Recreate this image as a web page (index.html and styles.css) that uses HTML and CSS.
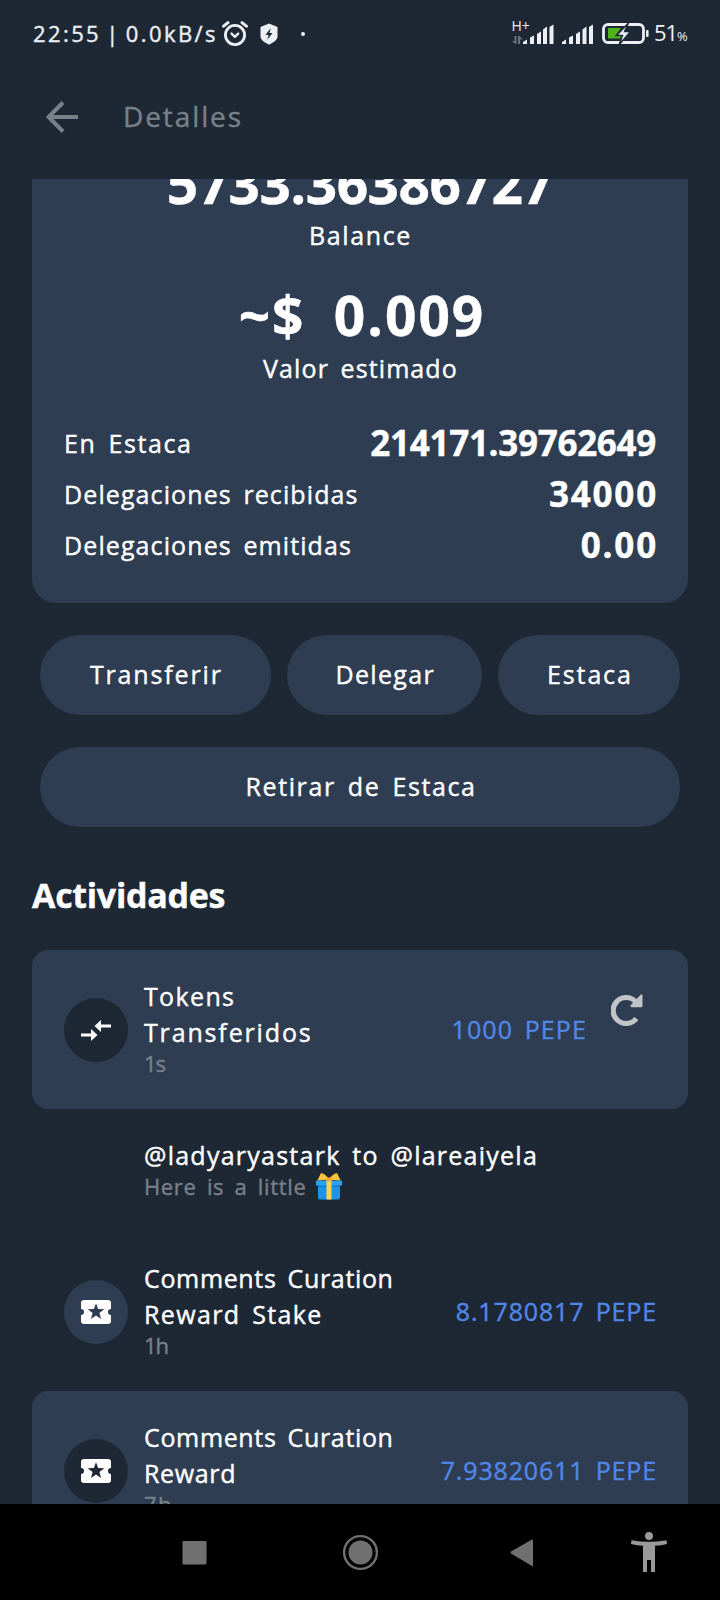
FILE: index.html
```html
<!DOCTYPE html>
<html lang="es">
<head>
<meta charset="utf-8">
<title>Detalles</title>
<link rel="stylesheet" href="styles.css">
</head>
<body>
<div class="status">
  <span class="clock">22:55 | 0.0kB/s</span>
  <svg class="alarm" width="26" height="26" viewBox="0 0 26 26" fill="none" stroke="#eceff3" stroke-width="2.8" stroke-linecap="round"><circle cx="13" cy="14" r="9.6"/><path d="M9.6 12.6l3.3 3.2 3.3-3.2" stroke-linejoin="round" stroke-width="2.4"/><path d="M1.600 5.200L6 1.600M24.400 5.200L20 1.600" stroke-width="3"/></svg>
  <svg class="shield" width="18" height="22" viewBox="0 0 18 22"><path d="M9 .5l8.500 3.600v9.400c0 3.200-3.600 5.800-8.500 8.200C4.100 19.300.5 16.700.5 13.500V4.100z" fill="#eceff3"/><path d="M10.800 5L5.500 12h3.200L7.200 17l5.300-7H9.500z" fill="#1e2835"/></svg>
  <i class="dot"></i>
  <svg class="signals" width="174" height="34" viewBox="0 0 174 34">
    <g fill="#68717d"><path d="M2.500 17h2v8h-1L0 22h2.500zM6 17h1.500l3 3.500H8V25H6z"/></g>
    <g fill="#eceff3">
      <path d="M11 25v-2l4-2.500V25zM18 25v-6.500l4-2V25zM25 15l4-2.500V25h-4zM31 10.500l4-3V25h-4zM37.500 8l4-2.500V25h-4z"/>
      <path d="M50 25v-2l4-2.500V25zM57 18.500l4-2V25h-4zM64 15l4-2.500V25h-4zM70.500 10.500l4-3V25h-4zM77 8l4-2.500V25h-4z"/>
      <rect x="134" y="11" width="2.600" height="7" rx="1"/>
    </g>
    <rect x="91.500" y="5.500" width="40" height="18" rx="4.500" fill="none" stroke="#eceff3" stroke-width="2.800"/>
    <path d="M96 9h13l-6 8h7l-2 2.500H96z" fill="#4fb31a"/>
    <path d="M116.500 4L104.500 16.500h6L107 26l11.500-13.500h-6z" fill="#eceff3" stroke="#1e2835" stroke-width="1.400"/>
    <text x="-.5" y="12" class="net">H+</text>
    <text x="142" y="22" class="pct">51</text>
    <text x="165" y="22" class="pct-sign">%</text>
  </svg>
</div>
<header class="bar">
  <svg width="32" height="32" viewBox="0 0 32 32" fill="none" stroke="#788187" stroke-width="4"><path d="M32 16H3M17 1.500L2.500 16 17 30.500"/></svg>
  <span class="title">Detalles</span>
</header>
<main class="view">
  <section class="card">
    <div class="big tight">5733.36386727</div>
    <div class="cap k4">Balance</div>
    <div class="big second">~$ 0.009</div>
    <div class="cap k2">Valor estimado</div>
    <div class="rows">
      <div class="row"><span class="k4">En Estaca</span><b class="n1">214171.39762649</b></div>
      <div class="row"><span class="k2">Delegaciones recibidas</span><b class="n2">34000</b></div>
      <div class="row"><span class="k2">Delegaciones emitidas</span><b class="n2">0.00</b></div>
    </div>
  </section>
  <div class="actions">
    <div class="btn b1 k5">Transferir</div><div class="btn b2 k3">Delegar</div><div class="btn b3 k5">Estaca</div>
  </div>
  <div class="actions"><div class="btn b1 k4">Retirar de Estaca</div></div>
  <h2>Actividades</h2>

  <article class="item filled">
    <div class="ico"><svg width="32" height="24" viewBox="0 0 32 24" fill="#fff"><path d="M1 15.500h10V11l6.500 6-6.500 6v-4.500H1zM31 6.500H21V2l-6.500 6L21 14V9.500h10z"/></svg></div>
    <div class="txt"><div class="k3">Tokens<br><span class="k5">Transferidos</span></div><div class="sub k0">1s</div></div>
    <div class="amt k2">1000 PEPE</div>
    <svg class="reload" width="32" height="32" viewBox="0 0 32 32"><path d="M24.500 7.500A13 13 0 1 0 25.400 24.500" fill="none" stroke="#c1c5c7" stroke-width="5.200"/><path d="M31.500 1.500v10.300a1.500 1.500 0 0 1-1.500 1.500H21c-1.500 0-2-1.500-1-2.500l9.500-9.800c.8-.8 2-.5 2 .5z" fill="#c1c5c7"/></svg>
  </article>
  <div class="more">
    <div class="k2b">@ladyaryastark to @lareaiyela</div>
    <div class="memo"><span class="k1">Here is a little</span><svg width="28" height="28" viewBox="0 0 28 28"><path d="M3 11h22v14.500q0 2-2 2H5q-2 0-2-2z" fill="#1e93e6"/><path d="M1 8.500h26v5H1z" fill="#2ba3f2"/><path d="M3 13.500h22v1.600H3z" fill="#1479c9"/><path d="M11.500 7.500h5v20h-5z" fill="#f8d548"/><path d="M14 7.500Q8 8.500 2.500 8.300L6 1q5 1 8 6.500zM14 7.500q6 1 11.500.8L22 1q-5 1-8 6.500z" fill="#fbc53a"/><path d="M11 5.500h6v4h-6z" fill="#f4a93a"/></svg></div>
  </div>
  <article class="item">
    <div class="ico"><svg width="32" height="26" viewBox="0 0 32 26"><path d="M4 1h24a3 3 0 0 1 3 3v6a3 3 0 0 0 0 6v6a3 3 0 0 1-3 3H4a3 3 0 0 1-3-3v-6a3 3 0 0 0 0-6V4a3 3 0 0 1 3-3z" fill="#fff"/><path class="star" d="M16 4.300l2.100 5.800 6.200.2-4.900 3.800 1.700 5.900-5.100-3.400-5.100 3.400 1.700-5.900-4.900-3.800 6.200-.2z"/></svg></div>
    <div class="txt"><div class="k1">Comments Curation<br><span class="k3">Reward Stake</span></div><div class="sub k0">1h</div></div>
    <div class="amt k1b">8.1780817 PEPE</div>
  </article>
  <article class="item filled">
    <div class="ico"><svg width="32" height="26" viewBox="0 0 32 26"><path d="M4 1h24a3 3 0 0 1 3 3v6a3 3 0 0 0 0 6v6a3 3 0 0 1-3 3H4a3 3 0 0 1-3-3v-6a3 3 0 0 0 0-6V4a3 3 0 0 1 3-3z" fill="#fff"/><path class="star" d="M16 4.300l2.100 5.800 6.200.2-4.900 3.800 1.700 5.900-5.100-3.400-5.100 3.400 1.700-5.900-4.900-3.800 6.200-.2z"/></svg></div>
    <div class="txt"><div class="k1">Comments Curation<br>Reward</div><div class="sub k3">7h</div></div>
    <div class="amt k1b">7.93820611 PEPE</div>
  </article>
</main>
<nav class="nav">
  <svg width="720" height="96" viewBox="0 0 720 96" fill="#707070"><rect x="182.500" y="37" width="24" height="23.500" rx="1"/><circle cx="360.500" cy="48.500" r="12"/><circle cx="360.500" cy="48.500" r="16.400" fill="none" stroke="#707070" stroke-width="2.400"/><path d="M511 47.500L532 35.500q1-.5 1 1V61q0 1.500-1 1L511 49.500q-1-1 0-2z"/><g fill="#999"><circle cx="649" cy="32" r="4"/><path d="M631.500 36.300q17.500 3 35 0l.5 3.700q-6 1.500-12 1.800V68h-4V56h-4v12h-4V41.800q-6-.3-12-1.800z"/></g></svg>
</nav>
</body>
</html>
```
FILE: styles.css
```css
* { box-sizing: border-box; }
body {
  margin: 0;
  width: 720px;
  height: 1600px;
  overflow: hidden;
  display: flex;
  flex-direction: column;
  background: #1e2835;
  color: #fff;
  font: 25px/36px "Open Sans", "Noto Sans", sans-serif;
  word-spacing: 4px;
  white-space: nowrap;
  -webkit-text-stroke: .4px currentColor;
}
svg { display: block; flex: none; }

/* letter spacing steps */
.k0 { letter-spacing: -1px; }
.k1 { letter-spacing: .65px; }
.k1b { letter-spacing: .85px; }
.k2 { letter-spacing: 1.1px; }
.k2b { letter-spacing: 1.25px; }
.k3 { letter-spacing: 1.35px; }
.k4 { letter-spacing: 1.6px; }
.k5 { letter-spacing: 1.85px; }

.status { height: 68px; flex: none; display: flex; align-items: center; padding-left: 32px; color: #eceff3; }
.clock { width: 190px; padding: 0 0 2px 1px; font-size: 22px; letter-spacing: 2.4px; word-spacing: -3px; }
.shield { margin-left: 12px; }
.dot { width: 4px; height: 4px; border-radius: 2px; background: #eceff3; margin-left: 23px; }
.signals { margin: 4px 0 0 207px; fill: #eceff3; overflow: visible; }
.net { font-size: 14px; }
.pct { font-size: 22px; letter-spacing: -1px; }
.pct-sign { font-size: 13px; }

.bar { height: 98px; margin-bottom: 13px; flex: none; display: flex; align-items: center; gap: 45px; padding-left: 46px; color: #788187; }
.title { font-size: 28px; letter-spacing: 1.9px; padding-bottom: 2px; }

.view { height: 1325px; flex: none; overflow: hidden; padding: 0 32px; }
.card { background: #2e3d51; border-radius: 0 0 24px 24px; height: 424px; padding: 0 32px; overflow: hidden; text-align: center; }
.big { font-size: 55px; font-weight: 700; line-height: 66px; letter-spacing: 2px; word-spacing: 12px; }
.tight { margin-top: -29px; letter-spacing: -.5px; }
.second { margin-top: 30px; padding-left: 4px; }
.cap { margin-top: 2px; padding-left: 1px; line-height: 34px; }
.second + .cap { margin-top: 3px; }
.rows { margin-top: 33px; }
.row { height: 51px; display: flex; justify-content: space-between; align-items: center; }
.row span { padding-bottom: 2px; }
.row b { font-size: 35px; padding-bottom: 2px; }
.n1 { letter-spacing: -.3px; }
.n2 { letter-spacing: 1.8px; margin-right: -2px; }

.actions { display: flex; gap: 16px; margin: 32px 8px 0; }
.btn { height: 80px; padding: 0 0 2px 2px; border-radius: 40px; background: #2e3d51; display: flex; align-items: center; justify-content: center; }
.b1 { flex: 231 0 0; }
.b2 { flex: 195 0 0; }
.b3 { flex: 182 0 0; }

h2 { margin: 45px 0 32px; font-size: 34px; line-height: 46px; font-weight: 700; letter-spacing: -.3px; }

.item { height: 159px; padding: 0 32px 3px; border-radius: 16px; display: flex; align-items: center; }
.filled { background: #2e3d51; }
.ico { width: 64px; height: 64px; margin: 3px 16px 0 0; flex: none; border-radius: 50%; background: #2e3d51; display: flex; align-items: center; justify-content: center; }
.filled .ico { background: #1e2835; }
.star { fill: #2e3d51; }
.filled .star { fill: #1e2835; }
.txt { flex: 1; }
.sub { margin-top: -2px; font-size: 22px; line-height: 30px; color: #788187; }
.amt { color: #5187e8; margin-right: -1px; padding-top: 2px; }
.reload { margin: -37px 13px 0 25px; }

.more { height: 123px; padding: 28px 0 0 112px; }
.memo { display: flex; align-items: center; gap: 9px; margin-top: -2px; font-size: 22px; line-height: 30px; color: #788187; }

.nav { height: 96px; flex: none; background: #000; }
```
